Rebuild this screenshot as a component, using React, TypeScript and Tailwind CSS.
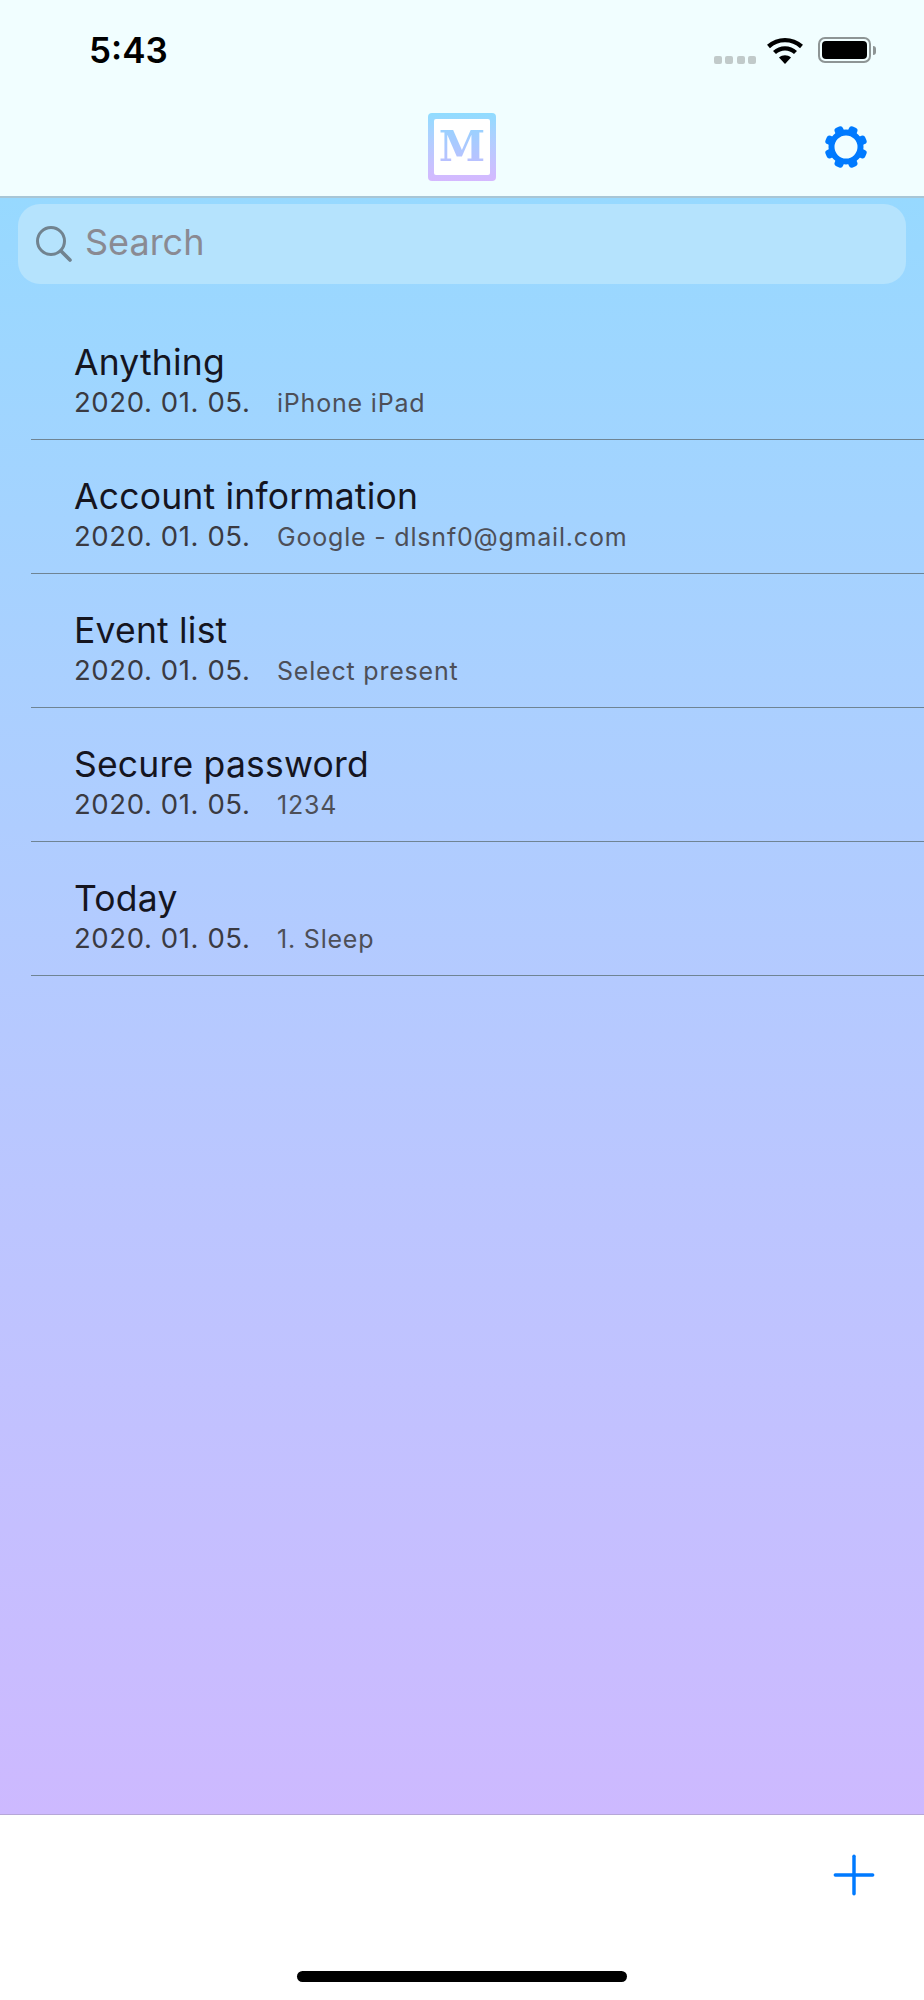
import { Plus } from "lucide-react";

type Note = { title: string; date: string; preview: string };

const notes: Note[] = [
  { title: "Anything", date: "2020. 01. 05.", preview: "iPhone iPad" },
  { title: "Account information", date: "2020. 01. 05.", preview: "Google - dlsnf0@gmail.com" },
  { title: "Event list", date: "2020. 01. 05.", preview: "Select present" },
  { title: "Secure password", date: "2020. 01. 05.", preview: "1234" },
  { title: "Today", date: "2020. 01. 05.", preview: "1. Sleep" },
];

function WifiIcon() {
  return (
    <svg width="36" height="27" viewBox="0 0 36 27" fill="none">
      <path d="M1.5 9.5C11 1 25 1 34.5 9.5" stroke="black" strokeWidth="4.4" />
      <path d="M7.5 15.5C13.5 10 22.5 10 28.5 15.5" stroke="black" strokeWidth="4.4" />
      <path d="M12 20.5L18 27L24 20.5C20.5 17.5 15.5 17.5 12 20.5Z" fill="black" />
    </svg>
  );
}

function Battery() {
  return (
    <div className="flex items-center">
      <div className="h-[26px] w-[53px] rounded-[7px] border-2 border-[#8e9595] p-[2px]">
        <div className="h-full w-full rounded-[4px] bg-black" />
      </div>
      <div className="ml-[2px] h-[9px] w-[3px] rounded-r-full bg-[#8e9595]" />
    </div>
  );
}

function GearIcon() {
  // eight rounded teeth around a ring
  const teeth = [22.5, 67.5, 112.5, 157.5, 202.5, 247.5, 292.5, 337.5];
  return (
    <svg width="44" height="44" viewBox="0 0 44 44" fill="none">
      <circle cx="22" cy="22" r="14.5" stroke="#007aff" strokeWidth="6" />
      {teeth.map((a) => (
        <rect key={a} x="17.5" y="0.5" width="9" height="9" rx="3" fill="#007aff" transform={`rotate(${a} 22 22)`} />
      ))}
    </svg>
  );
}

function SearchIcon() {
  return (
    <svg width="38" height="38" viewBox="0 0 38 38" fill="none" stroke="#71838f" strokeLinecap="round">
      <circle cx="16" cy="16" r="13.5" strokeWidth="3" />
      <path d="M26 26L35 35" strokeWidth="3.6" />
    </svg>
  );
}

function Logo() {
  return (
    <div className="rounded-[4px] bg-gradient-to-b from-[#90dcff] to-[#d5b8ff] p-[6px]">
      <div className="flex h-[56px] w-[56px] items-center justify-center rounded-[2px] bg-white">
        <span className="bg-gradient-to-b from-[#94d4ff] to-[#c0bcff] bg-clip-text font-['DejaVu_Serif',serif] text-[42px] leading-[46px] font-bold text-transparent">
          M
        </span>
      </div>
    </div>
  );
}

function NoteRow({ note }: { note: Note }) {
  return (
    <li className="ml-[31px] h-[134px] border-b border-[#6f8494] pt-[36px] pl-[43px]">
      <div className="text-[35.5px] leading-[42px] tracking-[0.2px] text-[#15151f]">{note.title}</div>
      <div className="mt-[2px] flex items-baseline">
        <span className="w-[203px] text-[27.5px] leading-[32px] tracking-[0.6px] text-[#3a3a42]">{note.date}</span>
        <span className="text-[25px] leading-[32px] tracking-[0.8px] text-[#4d4f58]">{note.preview}</span>
      </div>
    </li>
  );
}

export default function App() {
  return (
    <div className="flex h-[2000px] w-full flex-col overflow-hidden bg-white font-['Inter',sans-serif]">
      <header className="h-[198px] shrink-0 border-b-2 border-[#a8c6d6] bg-[#f1feff]">
        <div className="flex h-[100px] items-start justify-between pt-[29px] pr-[48px] pl-[89px]">
          <span className="text-[35px] leading-[42px] font-semibold text-black">5:43</span>
          <div className="flex items-start">
            <div className="mt-[27px] mr-[14px] flex gap-[3.5px]">
              <span className="h-[8px] w-[8px] rounded-[2px] bg-[#c1caca]" />
              <span className="h-[8px] w-[8px] rounded-[2px] bg-[#c1caca]" />
              <span className="h-[8px] w-[8px] rounded-[2px] bg-[#c1caca]" />
              <span className="h-[8px] w-[8px] rounded-[2px] bg-[#c1caca]" />
            </div>
            <div className="mt-[8px] mr-[15px] -ml-[3px]">
              <WifiIcon />
            </div>
            <div className="mt-[8px]">
              <Battery />
            </div>
          </div>
        </div>
        <div className="relative mt-[13px] flex justify-center">
          <Logo />
          <div className="absolute top-[12px] right-[56px]">
            <GearIcon />
          </div>
        </div>
      </header>

      <main className="min-h-0 flex-1 bg-gradient-to-b from-[#97d9ff] to-[#cdb9ff] pt-[6px]">
        <div className="mx-[18px] flex h-[80px] items-center rounded-[22px] bg-[#b5e3fd] pl-[17px]">
          <SearchIcon />
          <span className="mb-[4px] ml-[12px] text-[36px] text-[#8a8a92]">Search</span>
        </div>
        <ul className="mt-[22px]">
          {notes.map((note) => (
            <NoteRow key={note.title} note={note} />
          ))}
        </ul>
      </main>

      <footer className="relative h-[186px] shrink-0 border-t border-[#b6a7d8] bg-white">
        <Plus size={64} strokeWidth={1.3} className="absolute top-[28px] right-[38px] text-[#007aff]" />
        <div className="absolute bottom-[18px] left-[297px] h-[11px] w-[330px] rounded-full bg-black" />
      </footer>
    </div>
  );
}
